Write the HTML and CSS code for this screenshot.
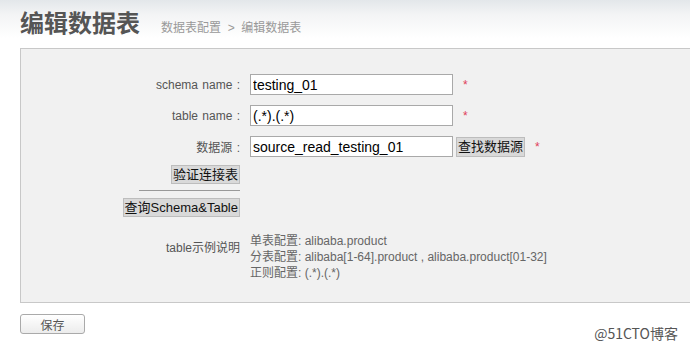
FILE: index.html
```html
<!DOCTYPE html>
<html lang="zh">
<head>
    <meta charset="UTF-8">
    <title>编辑数据表</title>
    <link rel="stylesheet" href="styles.css">
</head>
<body>

<div class="header">
    <h1 class="title">编辑数据表</h1>
    <span class="crumbs">数据表配置 &nbsp;&gt;&nbsp; 编辑数据表</span>
</div>

<div class="panel">
    <div class="form">
        <label class="label">schema name :</label>
        <div class="field">
            <input type="text" class="text" value="testing_01">
            <span class="star">*</span>
        </div>

        <label class="label">table name :</label>
        <div class="field">
            <input type="text" class="text" value="(.*).(.*)">
            <span class="star">*</span>
        </div>

        <label class="label">数据源 :</label>
        <div class="field">
            <input type="text" class="text" value="source_read_testing_01">
            <button class="btn">查找数据源</button>
            <span class="star">*</span>
        </div>

        <div class="actions">
            <button class="btn">验证连接表</button>
            <hr class="sep">
            <button class="btn">查询Schema&amp;Table</button>
        </div>
        <div></div>

        <label class="label note-label">table示例说明</label>
        <div class="notes">
            <div>单表配置: alibaba.product</div>
            <div>分表配置: alibaba[1-64].product , alibaba.product[01-32]</div>
            <div>正则配置: (.*).(.*)</div>
        </div>
    </div>
</div>

<button class="save">保存</button>

<span class="mark">@51CTO博客</span>

</body>
</html>
```

FILE: styles.css
```css
body {
    margin: 0;
    width: 690px;
    height: 349px;
    overflow: hidden;
    font-family: Arial, "Liberation Sans", "Noto Sans CJK SC", sans-serif;
    background: #fff;
    position: relative;
}
.header {
    height: 48px;
    padding-left: 20px;
    display: flex;
    align-items: baseline;
    background: linear-gradient(to bottom, #e3e7ea 0%, #f3f4f5 30%, #fff 80%);
    box-sizing: border-box;
    padding-top: 8px;
}
.title {
    margin: 0;
    font-size: 24px;
    font-weight: bold;
    color: #555;
    line-height: 32px;
}
.crumbs {
    margin-left: 21px;
    font-size: 12px;
    color: #999;
}
.panel {
    margin-left: 20px;
    width: 700px;
    height: 255px;
    border: 1px solid #c8c8c8;
    border-right: none;
    background: #f1f1f1;
    box-sizing: border-box;
    padding-top: 25px;
}
.form {
    display: grid;
    grid-template-columns: 219px auto;
    column-gap: 10px;
    row-gap: 10px;
    align-items: center;
}
.label {
    text-align: right;
    font-size: 12px;
    color: #555;
    word-spacing: 1px;
}
.field {
    display: flex;
    align-items: center;
    height: 21px;
}
.text {
    width: 203px;
    height: 21px;
    box-sizing: border-box;
    border: 1px solid #a9a9a9;
    padding: 0 2px;
    font-family: Arial, "Liberation Sans", sans-serif;
    font-size: 14px;
    color: #000;
    background: #fff;
    margin: 0;
}
.star {
    color: #e0405a;
    font-size: 12px;
    margin-left: 10px;
}
.btn {
    font-family: Arial, "Liberation Sans", "Noto Sans CJK SC", sans-serif;
    font-size: 13px;
    color: #111;
    background: #d9d9d9;
    border: 1px solid #bdbdbd;
    padding: 0 1px;
    height: 20px;
    line-height: 18px;
    margin: 0 0 0 3px;
}
.actions {
    display: flex;
    flex-direction: column;
    align-items: flex-end;
    margin-top: -2px;
}
.actions .btn {
    height: 19px;
    margin: 0;
}
.sep {
    width: 101px;
    margin: 6px 0 7px;
    border: none;
    border-top: 1px solid #999;
    align-self: flex-end;
}
.note-label {
    align-self: start;
    margin-top: 11px;
}
.notes {
    font-size: 12px;
    color: #666;
    line-height: 16px;
    margin-top: 6px;
}
.save {
    display: block;
    margin: 11px 0 0 20px;
    width: 65px;
    height: 20px;
    font-family: "Noto Sans CJK SC", sans-serif;
    font-size: 12px;
    color: #555;
    background: linear-gradient(to bottom, #fff, #ececec);
    border: 1px solid #aaa;
    border-radius: 3px;
    padding: 0;
}
.mark {
    position: absolute;
    right: 9px;
    bottom: 6px;
    font-family: "Noto Sans CJK SC", sans-serif;
    font-size: 14px;
    color: #555;
    background: #fff;
    padding: 0 3px;
}
```
